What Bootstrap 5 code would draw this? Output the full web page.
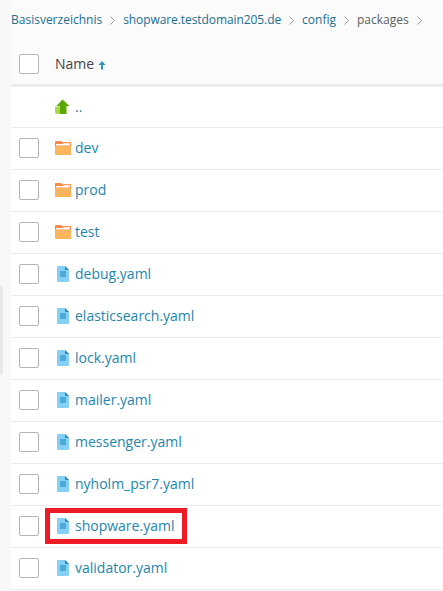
<!DOCTYPE html>
<html lang="de">
<head>
<meta charset="utf-8">
<title>Dateien</title>
<link rel="stylesheet" href="https://cdn.jsdelivr.net/npm/bootstrap@5.3.0/dist/css/bootstrap.min.css">
<style>
html,body{height:591px;overflow:hidden}
body{background:#f8f8f8;font-family:"Open Sans",sans-serif;font-size:14px;color:#333}
.pane{margin-left:11px;background:#fbfbfb;height:591px}
.crumbs{height:43px;padding-top:10px;font-size:12px;line-height:20px;white-space:nowrap;gap:8px}
.crumbs a{color:#1b6f91;text-decoration:none}
.crumbs .wide{letter-spacing:-.08px}
.crumbs span{color:#5f5f5f}
.chev{width:5px;height:9px;flex:none;margin-top:6px}
.head-row{height:44px;border-bottom:3px solid #ececec;padding-left:8px;font-size:14px;color:#444}
.arrow-svg{width:8px;height:10px;margin-left:4px;margin-top:2px;flex:none}
.tick{width:20px;height:20px;border:1px solid #b5b5b5;border-radius:2px;background:#fff;flex:none;margin-right:16px}
.tick-none{border-color:transparent;background:none}
.file-row{height:42px;background:#fff;border-bottom:1px solid #ececec;padding-left:8px;padding-bottom:1px;font-size:14px;position:relative}
.file-row.first{height:41px}
.file-row a{color:#1e86ad;text-decoration:none;margin-left:4px;line-height:20px}
.ic{width:16px;height:16px;flex:none}
.ic-wrap{width:16px;flex:none;display:flex}
.red-box{position:absolute;left:34px;top:2px;width:142px;height:36px;border:5px solid #ed1c24;pointer-events:none}
.side-tab{position:absolute;left:0;top:285px;width:3px;height:90px;background:#e9e9e9;border-radius:0 3px 3px 0}
</style>
</head>
<body>
<svg width="0" height="0" class="position-absolute">
<defs>
<symbol id="fold" viewBox="0 0 16 16"><path d="M0 2.200Q0 1 1.200 1H6L7.500 2.200H16V15H1.200Q0 15 0 13.800Z" fill="#fdb45f"/><path d="M0 2.200Q0 1 1.200 1H6L7.500 2.200H16V6H0Z" fill="#f58a4b"/><path d="M1 5.500L1.300 4H7.500L8.500 3.300H15V5.500Z" fill="#fff"/></symbol>
<symbol id="doc" viewBox="0 0 16 16"><path d="M2 1.200Q2 0 3.200 0H10L14 4V14.800Q14 16 12.800 16H3.200Q2 16 2 14.800Z" fill="#85d0f5"/><path d="M10 0L14 4H10Z" fill="#2f86ba"/><rect x="5" y="5" width="6" height="6" fill="#4fa9d6"/></symbol>
<symbol id="chv" viewBox="0 0 5 9"><path d="M.5 .5L4.500 4.500L.5 8.500" fill="none" stroke="#a0a0a0" stroke-width="1"/></symbol>
</defs>
</svg>
<div class="side-tab"></div>
<main class="pane">
<nav class="crumbs d-flex align-items-start">
<a href="#">Basisverzeichnis</a><svg class="chev"><use href="#chv"/></svg><a class="wide" href="#">shopware.testdomain205.de</a><svg class="chev"><use href="#chv"/></svg><a href="#">config</a><svg class="chev"><use href="#chv"/></svg><span>packages</span><svg class="chev"><use href="#chv"/></svg>
</nav>
<div class="head-row d-flex align-items-center"><div class="tick"></div><span>Name</span><svg class="arrow-svg" viewBox="0 0 8 10"><path d="M4 1L7.500 5H5V9.500H3V5H.5Z" fill="#2d94bd"/></svg></div>
<div class="file-row first d-flex align-items-center"><div class="tick tick-none"></div>
<span class="ic-wrap"><svg class="ic" viewBox="0 0 16 16"><path d="M0 7.500H6V15H2Q0 15 0 13Z" fill="#a6dc4b"/><path d="M7.500 .5L14.500 7H11.500V15H5V7H1.500Z" fill="#5aa800"/></svg></span><a href="#">..</a></div>
<div class="file-row d-flex align-items-center"><div class="tick"></div><span class="ic-wrap"><svg class="ic"><use href="#fold"/></svg></span><a href="#">dev</a></div>
<div class="file-row d-flex align-items-center"><div class="tick"></div><span class="ic-wrap"><svg class="ic"><use href="#fold"/></svg></span><a href="#">prod</a></div>
<div class="file-row d-flex align-items-center"><div class="tick"></div><span class="ic-wrap"><svg class="ic"><use href="#fold"/></svg></span><a href="#">test</a></div>
<div class="file-row d-flex align-items-center"><div class="tick"></div><span class="ic-wrap"><svg class="ic"><use href="#doc"/></svg></span><a href="#">debug.yaml</a></div>
<div class="file-row d-flex align-items-center"><div class="tick"></div><span class="ic-wrap"><svg class="ic"><use href="#doc"/></svg></span><a href="#">elasticsearch.yaml</a></div>
<div class="file-row d-flex align-items-center"><div class="tick"></div><span class="ic-wrap"><svg class="ic"><use href="#doc"/></svg></span><a href="#">lock.yaml</a></div>
<div class="file-row d-flex align-items-center"><div class="tick"></div><span class="ic-wrap"><svg class="ic"><use href="#doc"/></svg></span><a href="#">mailer.yaml</a></div>
<div class="file-row d-flex align-items-center"><div class="tick"></div><span class="ic-wrap"><svg class="ic"><use href="#doc"/></svg></span><a href="#">messenger.yaml</a></div>
<div class="file-row d-flex align-items-center"><div class="tick"></div><span class="ic-wrap"><svg class="ic"><use href="#doc"/></svg></span><a href="#">nyholm_psr7.yaml</a></div>
<div class="file-row d-flex align-items-center"><div class="tick"></div><span class="ic-wrap"><svg class="ic"><use href="#doc"/></svg></span><a href="#">shopware.yaml</a><div class="red-box"></div></div>
<div class="file-row d-flex align-items-center"><div class="tick"></div><span class="ic-wrap"><svg class="ic"><use href="#doc"/></svg></span><a href="#">validator.yaml</a></div>
</main>
<script src="https://cdn.jsdelivr.net/npm/bootstrap@5.3.0/dist/js/bootstrap.bundle.min.js"></script>
</body>
</html>
